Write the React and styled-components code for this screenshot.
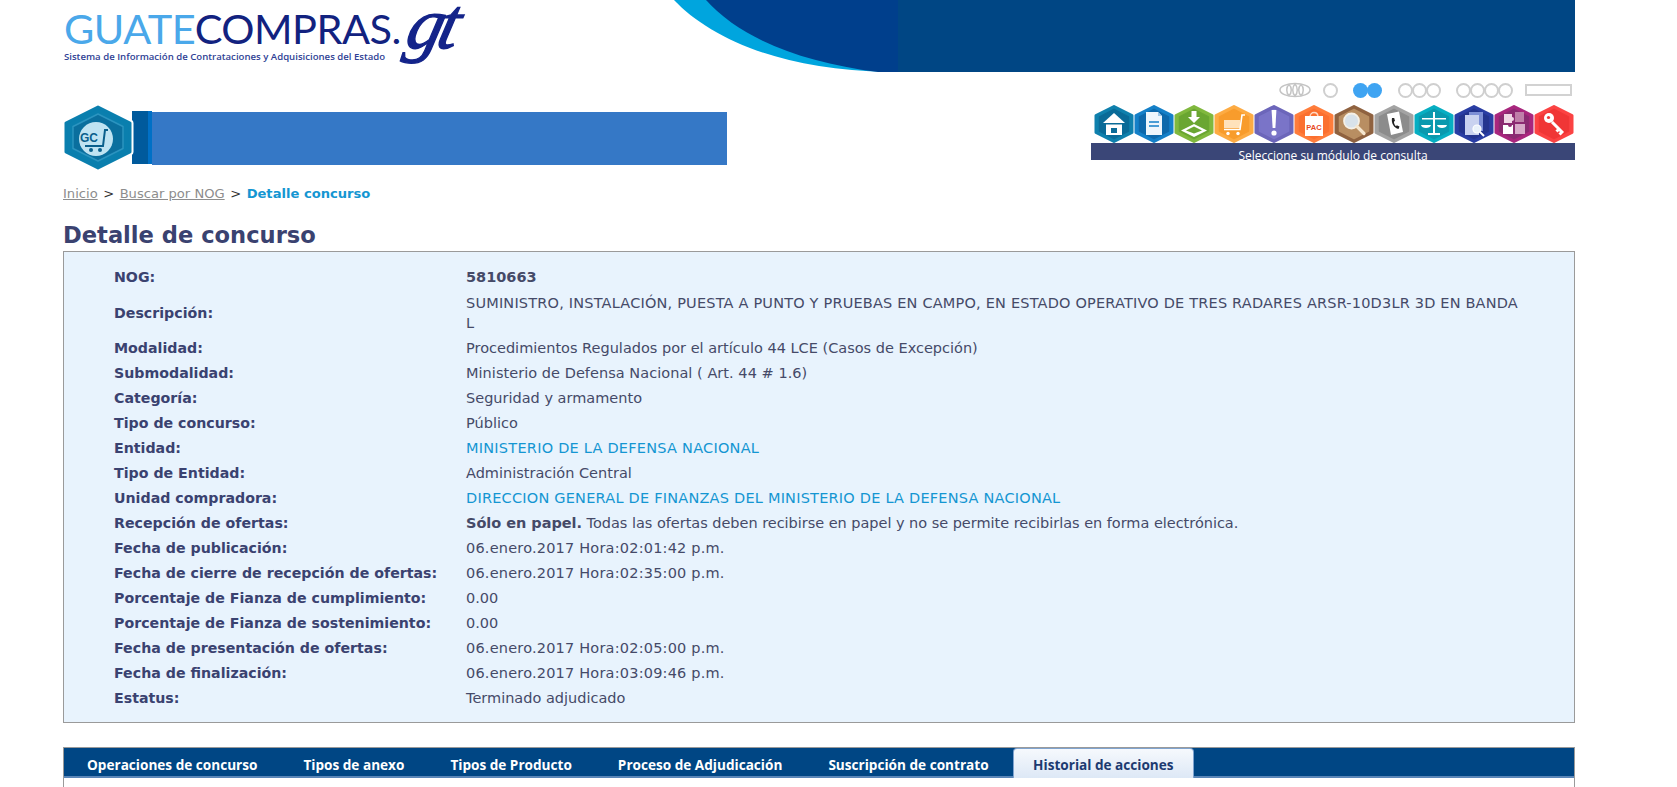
import React from "react";
import styled, { createGlobalStyle } from "styled-components";

const Global = createGlobalStyle`
  html, body { margin: 0; padding: 0; background: #fff; overflow: hidden; }
  body { font-family: "DejaVu Sans", Verdana, sans-serif; }
`;

const Page = styled.div`
  width: 1512px;
  margin-left: 63px;
  height: 787px;
  overflow: hidden;
`;

const TopRow = styled.header`
  display: flex;
  justify-content: space-between;
  height: 72px;
`;

const Logo = styled.div`
  display: flex;
  align-items: flex-start;
  padding-left: 1px;
`;

const LogoWords = styled.div`
  display: flex;
  flex-direction: column;
  padding-top: 7px;
`;

const Wordmark = styled.div`
  font-family: Lato, "Open Sans", sans-serif;
  font-size: 41.5px;
  line-height: 43px;
  letter-spacing: -0.5px;
  color: #12227f;
  white-space: nowrap;
`;

const Guate = styled.span`
  color: #4aa8ea;
`;

const Tagline = styled.div`
  font-family: "Open Sans", sans-serif;
  font-size: 9.6px;
  font-weight: 600;
  line-height: 14px;
  color: #2f3f95;
  white-space: nowrap;
`;

const Gt = styled.div`
  font-family: "Liberation Serif", serif;
  font-style: italic;
  font-weight: 400;
  font-size: 72px;
  line-height: 84px;
  height: 72px;
  margin: -18px 0 0 1px;
  padding-right: 6px;
  color: #14248a;
  -webkit-text-stroke: 1.4px #14248a;
  letter-spacing: -5px;
  transform: skewX(-14deg);
  transform-origin: left bottom;
`;

const BannerArt = styled.svg`
  display: block;
  width: 915px;
  height: 72px;
  flex: none;
`;

const MiddleRow = styled.div`
  display: flex;
  justify-content: space-between;
  align-items: flex-start;
`;

const Brand = styled.div`
  display: flex;
  align-items: flex-start;
  margin-top: 33px;
`;

const BrandHex = styled.svg`
  display: block;
  width: 74px;
  height: 66px;
  margin: 0 -5px -2px 0;
  position: relative;
  z-index: 1;
`;

const BrandTail = styled.div`
  width: 16px;
  height: 53px;
  margin-top: 6px;
  background: #005a9c;
`;

const BrandStrip = styled.div`
  width: 4px;
  height: 53px;
  margin-top: 6px;
  background: #0070c6;
`;

const BrandBar = styled.div`
  width: 575px;
  height: 53px;
  margin-top: 7px;
  background: #3578c6;
`;

const Modules = styled.div`
  display: flex;
  flex-direction: column;
  align-items: flex-end;
  width: 484px;
  padding-top: 11px;
`;

const Dots = styled.div`
  display: flex;
  align-items: center;
  height: 14px;
  margin-right: 3px;
`;

const DotGroup = styled.div`
  display: flex;
  margin-left: ${(p) => p.$gap}px;
`;

const Dot = styled.span`
  width: 15px;
  height: 15px;
  box-sizing: border-box;
  border-radius: 50%;
  border: ${(p) => (p.$on ? "0" : "2px solid #cfcfcf")};
  background: ${(p) => (p.$on ? "#3fa4f2" : "#fff")};
  margin-left: ${(p) => (p.$first ? 0 : -1)}px;
`;

const WideDot = styled.span`
  width: 47px;
  height: 12px;
  box-sizing: border-box;
  border: 2px solid #d2d2d2;
  margin-left: 12px;
`;

const BreadIcon = styled.svg`
  display: block;
  width: 32px;
  height: 16px;
`;

const IconRow = styled.div`
  display: flex;
  justify-content: flex-end;
  width: 100%;
  margin-top: 8px;
  padding-right: 1.5px;
  box-sizing: border-box;
`;

const HexSvg = styled.svg`
  display: block;
  width: 40px;
  height: 38px;
  flex: none;
`;

const ModuleBand = styled.div`
  width: 100%;
  height: 17px;
  overflow: hidden;
  background: #3a4677;
  color: #fff;
  font-family: "Open Sans", sans-serif;
  font-size: 12px;
  line-height: 26px;
  text-align: center;
  white-space: nowrap;
`;

const Crumbs = styled.nav`
  display: flex;
  align-items: center;
  gap: 5.5px;
  height: 20px;
  margin-top: 14px;
  font-size: 13.1px;
  color: #333;
`;

const CrumbLink = styled.a`
  color: #8d8d8d;
  text-decoration: underline;
`;

const CrumbCurrent = styled.strong`
  color: #1496d2;
`;

const Title = styled.h1`
  margin: 17px 0 1px;
  font-size: 22.6px;
  line-height: 30px;
  font-weight: 700;
  color: #3a4270;
`;

const Panel = styled.section`
  display: grid;
  grid-template-columns: 352px 1fr;
  box-sizing: border-box;
  padding: 12px 46px 12px 50px;
  border: 1px solid #9a9a9a;
  background: #e8f3fd;
  line-height: 20px;
  align-items: center;
`;

const Label = styled.div`
  font-size: 14.2px;
  font-weight: 700;
  color: #3a4270;
  padding: 2.5px 0;
  white-space: nowrap;
`;

const Value = styled.div`
  font-size: 14.5px;
  color: #454a68;
  padding: 2.5px 0 ${(p) => (p.$bold ? 3.5 : 2.5)}px;
  font-weight: ${(p) => (p.$bold ? 700 : 400)};
  letter-spacing: ${(p) => p.$spacing || 0}px;
`;

const ValueLink = styled.a`
  color: #1496d2;
  text-decoration: none;
`;

const TabBar = styled.div`
  display: flex;
  box-sizing: border-box;
  height: 31px;
  margin-top: 24px;
  border: 1px solid #9a9a9a;
  border-bottom: 0;
  background: #004684;
  box-shadow: inset 0 -2px 0 #5a86b8;
`;

const Tab = styled.div`
  box-sizing: border-box;
  height: 30px;
  padding: ${(p) => (p.$active ? 1 : 2)}px ${(p) => (p.$active ? 19.5 : 23)}px 0;
  font-family: "Open Sans", sans-serif;
  font-size: 13.6px;
  font-weight: 700;
  line-height: 29px;
  white-space: nowrap;
  color: ${(p) => (p.$active ? "#1c3a70" : "#fff")};
  ${(p) =>
    p.$active &&
    `
    background: linear-gradient(#f6f9fd, #dde8f6);
    border: 1px solid #7fa3cf;
    border-bottom: 0;
    border-radius: 4px 4px 0 0;
    margin-left: 1px;
  `}
`;

const TabBody = styled.div`
  height: 20px;
  border: 1px solid #9a9a9a;
  border-top: 0;
`;

const Hex = ({ outer, inner, children }) => (
  <HexSvg viewBox="0 0 40 38" aria-hidden="true">
    <path d="M20 1.5 L38 10.5 V27.5 L20 36.5 L2 27.5 V10.5 Z" fill={outer} stroke={outer} strokeWidth="3" strokeLinejoin="round" />
    <path d="M20 4.5 L34.5 12 V26 L20 33.5 L5.5 26 V12 Z" fill={inner} stroke={inner} strokeWidth="1.5" strokeLinejoin="round" />
    {children}
  </HexSvg>
);

const icons = [
  { outer: "#0f80ad", inner: "#0a6b98", art: (
    <g fill="#fff"><path d="M20 8 L31 18 H9 Z" /><path d="M12 19.5 H28 V30 H12 Z" /><rect x="17" y="23" width="6" height="5" fill="#0a6b98" /></g>
  ) },
  { outer: "#1580c8", inner: "#0e69ab", art: (
    <g><path d="M12 7 H24 L28 11 V30 H12 Z" fill="#eef6fc" /><path d="M24 7 L28 11 H24 Z" fill="#9cc7e8" /><path d="M15 17 H25 M15 21 H25" stroke="#1580c8" strokeWidth="1.5" /></g>
  ) },
  { outer: "#80b83e", inner: "#6aa632", art: (
    <g fill="#fff"><path d="M17.5 6 H22.5 V12 H26 L20 18 L14 12 H17.5 Z" /><path d="M20 19 L33 25.5 L20 32 L7 25.5 Z" /><path d="M20 21.5 L28 25.5 L20 28.5 L12 25.5 Z" fill="#6aa632" /></g>
  ) },
  { outer: "#fdab43", inner: "#f89c2c", art: (
    <g><path d="M10 15 H26 V23 H10 Z" fill="#ffe2bb" /><path d="M10 24.5 H26 L28 10 H31" fill="none" stroke="#fff" strokeWidth="1.6" /><circle cx="14" cy="28.5" r="1.7" fill="#fff" /><circle cx="24" cy="28.5" r="1.7" fill="#fff" /></g>
  ) },
  { outer: "#6c66ba", inner: "#7a74c8", art: (
    <g fill="#fff"><path d="M17.6 5 H22.4 L21.4 23 H18.6 Z" /><circle cx="20" cy="28" r="2.6" /></g>
  ) },
  { outer: "#ff7d3b", inner: "#fb7030", art: (
    <g><path d="M16 12 C16 6 24 6 24 12" fill="none" stroke="#ffd9c4" strokeWidth="1.4" /><rect x="11" y="11" width="18" height="20" fill="#fff" /><text x="20" y="24.5" textAnchor="middle" fontFamily="Liberation Sans, sans-serif" fontSize="7.5" fontWeight="700" fill="#e8481f">PAC</text></g>
  ) },
  { outer: "#8f6240", inner: "#b88e62", art: (
    <g><circle cx="17.5" cy="16" r="7.5" fill="#d8e2ea" stroke="#f5f0e6" strokeWidth="1.8" /><path d="M23 21.5 L30 28.5" stroke="#f5e6cf" strokeWidth="3.2" strokeLinecap="round" /></g>
  ) },
  { outer: "#a3a3a3", inner: "#8c8c8c", art: (
    <g><path d="M13 9 L25 6.5 L29 27 L17 30 Z" fill="#fff" /><path d="M18 13 C17 18 20 23 24.5 24 L25.5 21.5 L22.8 20.3 L22 21.2 C20.6 20 19.8 18 20 16.5 L21 16 L20.2 13 Z" fill="#222" /></g>
  ) },
  { outer: "#07aec2", inner: "#0a99ae", art: (
    <g fill="#fff"><rect x="19" y="7" width="2" height="21" /><rect x="14" y="28" width="12" height="2" /><path d="M8 13 H32 V14.5 H8 Z" /><path d="M7 20 H17 C16.5 24 7.5 24 7 20 Z M23 20 H33 C32.5 24 23.5 24 23 20 Z" /></g>
  ) },
  { outer: "#2a3ea4", inner: "#24358f", art: (
    <g><path d="M15 7 H29 V26 H15 Z" fill="#7d8fd6" /><path d="M11 10 H25 V30 H11 Z" fill="#c9d2f0" /><circle cx="23" cy="24" r="4" fill="#eaf2fb" stroke="#fff" strokeWidth="1.2" /><path d="M26 27 L30 31" stroke="#fff" strokeWidth="2" /></g>
  ) },
  { outer: "#a9277e", inner: "#8b2a72", art: (
    <g><path d="M10 9 H18 V12 A2 2 0 0 1 18 16 V18 H10 Z" fill="#f0d7e6" /><rect x="21" y="7" width="9" height="10" fill="#bf7fa9" /><path d="M9 20 H14 A2 2 0 0 0 18 20 H19 V29 H9 Z" fill="#fff" /><rect x="21" y="19" width="10" height="10" fill="#d7a9c8" /></g>
  ) },
  { outer: "#fb4343", inner: "#f03636", art: (
    <g fill="none"><circle cx="15" cy="13" r="5" fill="#fff" /><circle cx="14.5" cy="12.5" r="1.6" fill="#f03636" /><path d="M18 17 L29 28 M25 24 L22.5 26.5 M28 27 L25.5 29.5" stroke="#fff" strokeWidth="3" /></g>
  ) },
];

const rows = [
  ["NOG:", <Value $bold>5810663</Value>],
  ["Descripción:", <Value $spacing={0.19}>SUMINISTRO, INSTALACIÓN, PUESTA A PUNTO Y PRUEBAS EN CAMPO, EN ESTADO OPERATIVO DE TRES RADARES ARSR-10D3LR 3D EN BANDA L</Value>],
  ["Modalidad:", <Value>Procedimientos Regulados por el artículo 44 LCE (Casos de Excepción)</Value>],
  ["Submodalidad:", <Value $spacing={0.04}>Ministerio de Defensa Nacional ( Art. 44 # 1.6)</Value>],
  ["Categoría:", <Value>Seguridad y armamento</Value>],
  ["Tipo de concurso:", <Value>Público</Value>],
  ["Entidad:", <Value $spacing={0.24}><ValueLink>MINISTERIO DE LA DEFENSA NACIONAL</ValueLink></Value>],
  ["Tipo de Entidad:", <Value>Administración Central</Value>],
  ["Unidad compradora:", <Value $spacing={0.22}><ValueLink>DIRECCION GENERAL DE FINANZAS DEL MINISTERIO DE LA DEFENSA NACIONAL</ValueLink></Value>],
  ["Recepción de ofertas:", <Value $spacing={-0.03}><strong>Sólo en papel.</strong> Todas las ofertas deben recibirse en papel y no se permite recibirlas en forma electrónica.</Value>],
  ["Fecha de publicación:", <Value $spacing={0.2}>06.enero.2017 Hora:02:01:42 p.m.</Value>],
  ["Fecha de cierre de recepción de ofertas:", <Value $spacing={0.2}>06.enero.2017 Hora:02:35:00 p.m.</Value>],
  ["Porcentaje de Fianza de cumplimiento:", <Value>0.00</Value>],
  ["Porcentaje de Fianza de sostenimiento:", <Value>0.00</Value>],
  ["Fecha de presentación de ofertas:", <Value $spacing={0.2}>06.enero.2017 Hora:02:05:00 p.m.</Value>],
  ["Fecha de finalización:", <Value $spacing={0.2}>06.enero.2017 Hora:03:09:46 p.m.</Value>],
  ["Estatus:", <Value>Terminado adjudicado</Value>],
];

const tabs = ["Operaciones de concurso", "Tipos de anexo", "Tipos de Producto", "Proceso de Adjudicación", "Suscripción de contrato"];

export default function App() {
  return (
    <Page>
      <Global />
      <TopRow>
        <Logo>
          <LogoWords>
            <Wordmark><Guate>GUATE</Guate>COMPRAS.</Wordmark>
            <Tagline>Sistema de Información de Contrataciones y Adquisiciones del Estado</Tagline>
          </LogoWords>
          <Gt>gt</Gt>
        </Logo>
        <BannerArt viewBox="0 0 915 72" preserveAspectRatio="none" aria-hidden="true">
          <rect x="0" y="0" width="915" height="72" fill="#fff" />
          <path d="M14 0 C50 38 120 70 228 72 H915 V0 Z" fill="#00a5de" />
          <path d="M46 0 C80 38 140 62 218 72 H915 V0 Z" fill="#003f8c" />
          <rect x="238" y="0" width="677" height="72" fill="#004684" />
        </BannerArt>
      </TopRow>
      <MiddleRow>
        <Brand>
          <BrandHex viewBox="0 0 74 66" aria-hidden="true">
            <path d="M35 2 L67 18 V47 L35 63 L3 47 V18 Z" fill="#0a7fae" stroke="#fff" strokeWidth="7" strokeLinejoin="round" />
            <path d="M35 2 L67 18 V47 L35 63 L3 47 V18 Z" fill="#0a7fae" stroke="#0a7fae" strokeWidth="3" strokeLinejoin="round" />
            <path d="M35 9 L60 21.5 V43.5 L35 56 L10 43.5 V21.5 Z" fill="#0a6f9e" stroke="#2b94bf" strokeWidth="1.5" strokeLinejoin="round" />
            <circle cx="33" cy="34" r="17" fill="#bfe3f2" />
            <text x="26" y="37" fontFamily="Liberation Sans, sans-serif" fontSize="12" fontWeight="700" fill="#0a5f8c" textAnchor="middle">GC</text>
            <path d="M45 25 H42 L40 41 H22" fill="none" stroke="#0a5f8c" strokeWidth="2" />
            <circle cx="28" cy="45" r="2" fill="#0a5f8c" />
            <circle cx="37" cy="45" r="2" fill="#0a5f8c" />
          </BrandHex>
          <BrandTail />
          <BrandStrip />
          <BrandBar />
        </Brand>
        <Modules>
          <Dots>
            <BreadIcon viewBox="0 0 32 16" aria-hidden="true">
              <g fill="none" stroke="#c4c4c4" strokeWidth="1.5">
                <ellipse cx="16" cy="8" rx="15" ry="6.5" />
                <path d="M10 2.5 C7 5 7 11 10 13.5 C13 11 13 5 10 2.5 M16 2 C13 5 13 11 16 14 C19 11 19 5 16 2 M22 2.5 C19 5 19 11 22 13.5 C25 11 25 5 22 2.5" />
              </g>
            </BreadIcon>
            <DotGroup $gap={12}><Dot $first /></DotGroup>
            <DotGroup $gap={15}><Dot $first $on /><Dot $on /></DotGroup>
            <DotGroup $gap={16}><Dot $first /><Dot /><Dot /></DotGroup>
            <DotGroup $gap={15}><Dot $first /><Dot /><Dot /><Dot /></DotGroup>
            <WideDot />
          </Dots>
          <IconRow>
            {icons.map((ic, i) => (
              <Hex key={i} outer={ic.outer} inner={ic.inner}>{ic.art}</Hex>
            ))}
          </IconRow>
          <ModuleBand>Seleccione su módulo de consulta</ModuleBand>
        </Modules>
      </MiddleRow>
      <Crumbs>
        <CrumbLink>Inicio</CrumbLink>
        <span>&gt;</span>
        <CrumbLink>Buscar por NOG</CrumbLink>
        <span>&gt;</span>
        <CrumbCurrent>Detalle concurso</CrumbCurrent>
      </Crumbs>
      <Title>Detalle de concurso</Title>
      <Panel>
        {rows.map(([label, value]) => (
          <React.Fragment key={label}>
            <Label>{label}</Label>
            {value}
          </React.Fragment>
        ))}
      </Panel>
      <TabBar>
        {tabs.map((t) => <Tab key={t}>{t}</Tab>)}
        <Tab $active>Historial de acciones</Tab>
      </TabBar>
      <TabBody />
    </Page>
  );
}
